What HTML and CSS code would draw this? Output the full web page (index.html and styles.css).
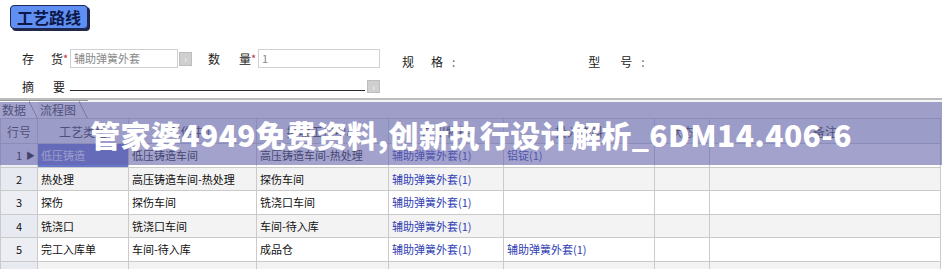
FILE: index.html
```
<!DOCTYPE html>
<html lang="zh-CN">
<head>
    <meta charset="UTF-8">
    <meta name="viewport" content="width=device-width, initial-scale=1.0">
    <title>工艺路线</title>
    <link rel="stylesheet" href="styles.css">
</head>
<body>
    <div class="topbar">
        <span class="title-btn">工艺路线</span>
    </div>

    <div class="form">
        <div class="frow">
            <span class="lbl w41"><span>存</span><span>货</span></span>
            <span class="req">*</span>
            <span class="input w108">辅助弹簧外套</span>
            <span class="pick">&rsaquo;</span>
            <span class="lbl w43 gap16"><span>数</span><span>量</span></span>
            <span class="req">*</span>
            <span class="input w122">1</span>
            <span class="lbl w41 gap22 low"><span>规</span><span>格</span></span>
            <span class="colon low">:</span>
            <span class="lbl w44 gap133 low"><span>型</span><span>号</span></span>
            <span class="colon low">:</span>
        </div>
        <div class="frow short">
            <span class="lbl w43"><span>摘</span><span>要</span></span>
            <span class="uline"></span>
            <span class="pick sq">&rsaquo;</span>
        </div>
    </div>

    <div class="sep"></div>

    <div class="tabs">
        <span class="tab active">数据</span>
        <span class="tab">流程图</span>
    </div>

    <table class="grid">
        <colgroup>
            <col style="width:37px">
            <col style="width:91px">
            <col style="width:128px">
            <col style="width:132px">
            <col style="width:115px">
            <col style="width:151px">
            <col style="width:55px">
            <col style="width:231px">
        </colgroup>
        <thead>
            <tr>
                <th>行号</th>
                <th>工艺类型</th>
                <th>工作中心</th>
                <th>接收工作中心</th>
                <th>产出物料</th>
                <th>投入物料</th>
                <th>状态</th>
                <th>备注</th>
            </tr>
        </thead>
        <tbody>
            <tr>
                <td class="num">1<span class="cur">&#9654;</span></td>
                <td class="sel">低压铸造</td>
                <td>低压铸造车间</td>
                <td>高压铸造车间-热处理</td>
                <td class="link">辅助弹簧外套(1)</td>
                <td class="link">铝锭(1)</td>
                <td></td>
                <td></td>
            </tr>
            <tr>
                <td class="num">2</td>
                <td>热处理</td>
                <td>高压铸造车间-热处理</td>
                <td>探伤车间</td>
                <td class="link">辅助弹簧外套(1)</td>
                <td></td>
                <td></td>
                <td></td>
            </tr>
            <tr>
                <td class="num">3</td>
                <td>探伤</td>
                <td>探伤车间</td>
                <td>铣浇口车间</td>
                <td class="link">辅助弹簧外套(1)</td>
                <td></td>
                <td></td>
                <td></td>
            </tr>
            <tr>
                <td class="num">4</td>
                <td>铣浇口</td>
                <td>铣浇口车间</td>
                <td>车间-待入库</td>
                <td class="link">辅助弹簧外套(1)</td>
                <td></td>
                <td></td>
                <td></td>
            </tr>
            <tr>
                <td class="num">5</td>
                <td>完工入库单</td>
                <td>车间-待入库</td>
                <td>成品仓</td>
                <td class="link">辅助弹簧外套(1)</td>
                <td class="link">辅助弹簧外套(1)</td>
                <td></td>
                <td></td>
            </tr>
            <tr class="cut">
                <td class="num"></td>
                <td></td>
                <td></td>
                <td></td>
                <td></td>
                <td></td>
                <td></td>
                <td></td>
            </tr>
        </tbody>
    </table>

    <div class="banner">管家婆4949免费资料,创新执行设计解析_6DM14.406-6</div>
</body>
</html>
```

FILE: styles.css
```
html, body { overflow: hidden; }
body { margin: 0; width: 942px; height: 269px; position: relative; background: #fff; color: #222; font-family: "Noto Sans CJK SC", "Liberation Sans", sans-serif; font-size: 12px; }

.topbar { height: 29px; padding: 5px 0 0 10px; box-sizing: border-box; }
.title-btn { display: inline-block; height: 24px; line-height: 22px; padding: 0 6px; box-sizing: border-box; background: #5f8ff3; border: 1px solid #1c2856; border-radius: 4px; box-shadow: 2px 2px 0 #202846; color: #0c1848; font-size: 16px; font-weight: bold; }

.form { padding: 20px 0 0 22px; }
.frow { display: flex; align-items: center; height: 19px; }
.frow.short { height: 16px; margin-top: 10px; }
.lbl { display: flex; justify-content: space-between; color: #222; }
.w41 { width: 41px; }
.w43 { width: 43px; }
.w44 { width: 44px; }
.gap16 { margin-left: 16px; }
.gap22 { margin-left: 22px; }
.gap133 { margin-left: 133px; }
.low { margin-top: 6px; }
.colon { margin-left: 9px; color: #666; }
.req { width: 7px; color: #c03030; font-size: 11px; line-height: 12px; margin-bottom: 2px; }
.input { height: 19px; box-sizing: border-box; border: 1px solid #d0d0d0; padding-left: 3px; line-height: 17px; color: #888; font-size: 11px; }
.w108 { width: 108px; }
.w122 { width: 122px; }
.pick { width: 13px; height: 14px; margin-left: 1px; box-sizing: border-box; background: #cfcfcf; border: 1px solid #bdbdbd; color: #f2f2f2; font-size: 10px; line-height: 11px; text-align: center; }
.pick.sq { height: 13px; margin-left: 2px; }
.uline { width: 295px; height: 1px; margin: 9px 0 0 5px; background: #2a2a2a; }

.sep { height: 2px; margin-top: 4px; background: #bcbcbc; }

/* sheet tabs with a cut top-right corner */
.tabs { display: flex; height: 18px; background: #f4f4f4; }
.tab { padding: 0 12px 0 2px; line-height: 18px; color: #333; border-top: 1px solid #999; background: linear-gradient(to bottom left, transparent 46%, #888 50%, transparent 56%) no-repeat right top / 9px 18px; }
.tab.active { background-color: #fff; }

.grid { border-collapse: collapse; table-layout: fixed; width: 940px; font-size: 11px; }
.grid th { height: 24px; padding: 0; background: #f1f1f4; border: 1px solid #c8c8d2; color: #333; font-weight: normal; font-size: 12px; }
.grid td { height: 22.5px; padding: 0 0 0 3px; border: 1px solid #cacaca; color: #111; white-space: nowrap; overflow: hidden; }
.grid tr.cut td { height: 8px; }
.grid tbody tr:nth-child(even) td { background: #f3f3f3; }
.grid td.num { padding: 0; background: #eceef4; text-align: center; position: relative; }
.grid tbody tr:nth-child(even) td.num { background: #e7eaf1; }
.cur { position: absolute; right: 2px; top: 5px; font-size: 9px; color: #111; }
.grid td.sel { background: #6677cc; color: #eef0ff; }
.grid td.link { color: #3040b4; }

.banner { position: absolute; left: 0; top: 102px; width: 942px; height: 63px; display: flex; align-items: center; justify-content: center; background: rgba(100, 100, 170, .6); color: #fff; font-size: 30px; font-weight: 900; letter-spacing: 0.4px; white-space: nowrap; }
```
